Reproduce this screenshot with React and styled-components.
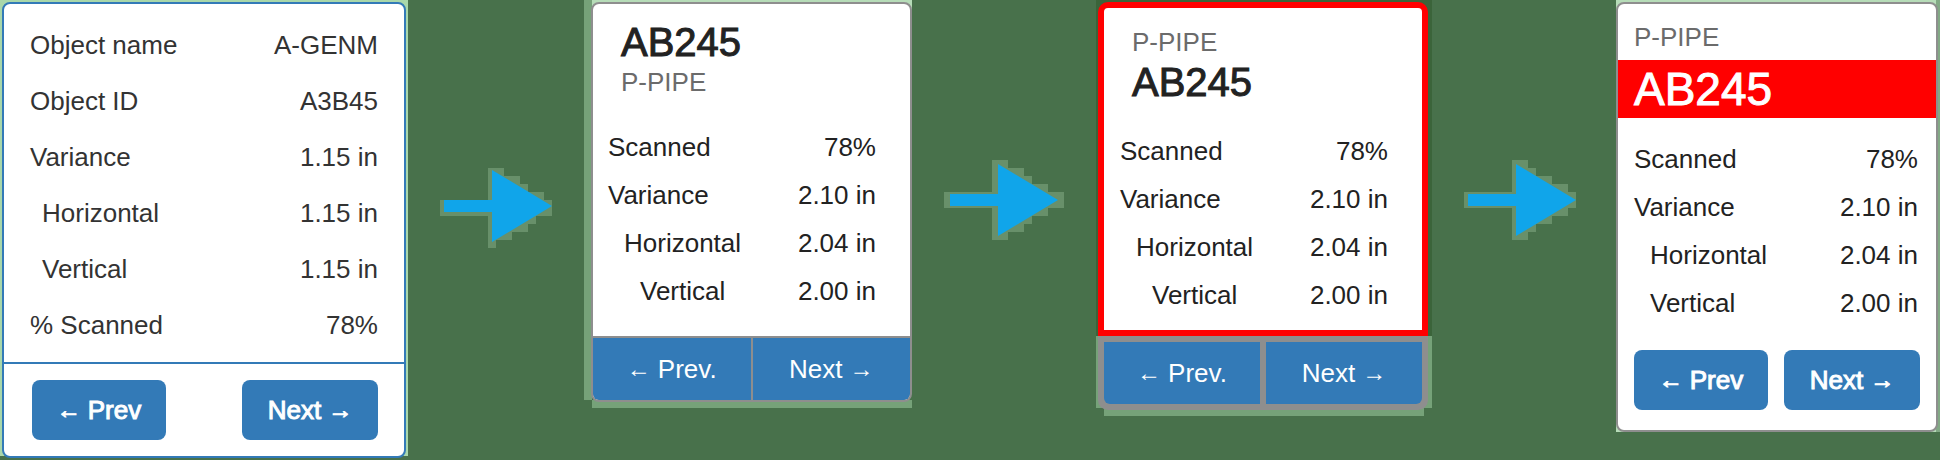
import React from "react";
import styled, { createGlobalStyle, css } from "styled-components";

const color = {
  page: "#48714b",
  blue: "#337ab7",
  red: "#ff0000",
  grey: "#8e8e8e",
  ink: "#222222",
  softInk: "#333333",
  muted: "#6b6b6b",
  mint: "#a9d7aa",
  paleMint: "#b6dcb8",
  sage: "#76a279",
  moss: "#3b643a",
  arrow: "#10a5ea",
  arrowEdge: "#68906a",
};

const GlobalStyle = createGlobalStyle`
  *, *::before, *::after { box-sizing: border-box; }
  html, body { margin: 0; }
  body {
    background: ${color.page};
    color: ${color.ink};
    font: 26px/36px "Liberation Sans", Arial, sans-serif;
    overflow-x: hidden;
  }
`;

const Board = styled.main`
  display: grid;
  grid-template-columns: 408fr 176fr 328fr 184fr 336fr 184fr 324fr;
  align-items: start;
  min-height: 100vh;
`;

const frames = {
  first: css`
    padding: 2px 2px 0;
    background: linear-gradient(${color.mint}, ${color.mint}) 0 0 / 100% calc(100% - 2px) no-repeat;
  `,
  second: css`
    padding: 2px 0 6px 7px;
    background:
      linear-gradient(${color.paleMint}, ${color.paleMint}) right top / calc(100% - 8px) 10px no-repeat,
      linear-gradient(${color.sage}, ${color.sage}) left top / 8px calc(100% - 8px) no-repeat,
      linear-gradient(${color.sage}, ${color.sage}) right bottom / calc(100% - 8px) 8px no-repeat;
  `,
  third: css`
    padding: 2px 4px 6px 2px;
    background:
      linear-gradient(${color.sage}, ${color.sage}) left 0 bottom 8px / 100% 72px no-repeat,
      linear-gradient(${color.sage}, ${color.sage}) center bottom / calc(100% - 16px) 8px no-repeat,
      linear-gradient(${color.moss}, ${color.moss}) 0 0 / 100% 336px no-repeat;
  `,
  fourth: css`
    padding: 2px 2px 0 0;
    background: linear-gradient(${color.paleMint}, ${color.paleMint}) 0 0 / calc(100% - 4px) 100% no-repeat,
      linear-gradient(#82a985, #82a985) right top / 4px 100% no-repeat;
  `,
};

const Frame = styled.div`
  ${({ $kind }) => frames[$kind]}
`;

const Card = styled.section`
  background: #ffffff;
  border: 2px solid ${({ $border }) => $border || color.grey};
  border-radius: 8px;
  color: ${({ $color }) => $color || color.ink};
  overflow: hidden;
`;

const AlertBody = styled.div`
  background: #ffffff;
  border: 6px solid ${color.red};
  border-radius: 10px 10px 0 0;
`;

const Heading = styled.header`
  display: flex;
  flex-direction: column;
  padding: ${({ $pad }) => $pad};
`;

const Code = styled.h2`
  margin: 0;
  font-size: ${({ $large }) => ($large ? 46 : 40)}px;
  line-height: ${({ $large }) => ($large ? 58 : 44)}px;
  font-weight: 400;
  -webkit-text-stroke: 1px currentColor;
  ${({ $large }) =>
    $large &&
    css`
      padding: 0 16px;
      background: ${color.red};
      color: #ffffff;
    `}
`;

const Kind = styled.p`
  margin: 0;
  color: ${color.muted};
  font-kerning: none;
  line-height: 36px;
`;

const Table = styled.table`
  width: 100%;
  border-collapse: collapse;
`;

const TableArea = styled.div`
  padding: ${({ $pad }) => $pad};
`;

const Label = styled.th`
  padding: 0 0 0 ${({ $indent }) => $indent}px;
  font-weight: 400;
  text-align: left;
  line-height: ${({ $height }) => $height}px;
`;

const Value = styled.td`
  padding: 0;
  font-kerning: none;
  text-align: right;
  line-height: ${({ $height }) => $height}px;
`;

const Actions = styled.footer`
  display: flex;
  justify-content: space-between;
  padding: ${({ $pad }) => $pad};
  ${({ $ruled }) => $ruled && css`border-top: 2px solid ${color.blue};`}
`;

const Button = styled.button`
  display: flex;
  align-items: center;
  justify-content: center;
  gap: 7px;
  height: 60px;
  width: ${({ $next }) => ($next ? 136 : 134)}px;
  padding: 0;
  border: 0;
  border-radius: 8px;
  background: ${color.blue};
  color: #ffffff;
  font: inherit;
  -webkit-text-stroke: 1px currentColor;
  cursor: pointer;
`;

const SplitActions = styled.footer`
  display: grid;
  grid-template-columns: 1fr 1fr;
  gap: ${({ $line }) => $line}px;
  background: ${color.grey};
  ${({ $heavy, $line }) =>
    $heavy
      ? css`
          padding: 6px;
          border-radius: 0 0 10px 10px;
        `
      : css`
          padding-top: ${$line}px;
        `}
`;

const SplitButton = styled(Button)`
  width: auto;
  height: 62px;
  border-radius: ${({ $next }) => ($next ? "0 0 6px 0" : "0 0 0 6px")};
  -webkit-text-stroke: 0;
`;

const Glyph = styled.span`
  font-size: 24px;
`;

const ArrowCell = styled.div`
  display: flex;
  justify-content: center;
  padding-top: ${({ $top }) => $top}px;
  svg { display: block; }
`;

const scanRows = (verticalIndent) => [
  ["Scanned", "78%", 0],
  ["Variance", "2.10 in", 0],
  ["Horizontal", "2.04 in", 16],
  ["Vertical", "2.00 in", verticalIndent],
];

const objectRows = [
  ["Object name", "A-GENM", 0],
  ["Object ID", "A3B45", 0],
  ["Variance", "1.15 in", 0],
  ["Horizontal", "1.15 in", 12],
  ["Vertical", "1.15 in", 12],
  ["% Scanned", "78%", 0],
];

function Readings({ rows, height, pad }) {
  return (
    <TableArea $pad={pad}>
      <Table>
        <tbody>
          {rows.map(([label, value, indent]) => (
            <tr key={label}>
              <Label scope="row" $indent={indent} $height={height}>{label}</Label>
              <Value $height={height}>{value}</Value>
            </tr>
          ))}
        </tbody>
      </Table>
    </TableArea>
  );
}

function Pager({ as: Part = Button, prev = "Prev" }) {
  return (
    <>
      <Part type="button"><Glyph>←</Glyph>{prev}</Part>
      <Part type="button" $next>Next<Glyph>→</Glyph></Part>
    </>
  );
}

function Arrow({ top, width, viewBox, edge, fill }) {
  return (
    <ArrowCell $top={top}>
      <svg width={width} height="80" viewBox={viewBox} aria-hidden="true">
        <path d={edge} fill={color.arrowEdge} />
        <path d={fill} fill={color.arrow} />
      </svg>
    </ArrowCell>
  );
}

export default function App() {
  return (
    <>
      <GlobalStyle />
      <Board>
        <Frame $kind="first">
          <Card $border={color.blue} $color={color.softInk}>
            <Readings rows={objectRows} height={56} pad="13px 26px 9px" />
            <Actions $ruled $pad="16px 26px 16px 28px"><Pager /></Actions>
          </Card>
        </Frame>

        <Arrow
          top={168}
          width={112}
          viewBox="10 18 112 80"
          edge="M10 50V66H58V98H66V90H82V82H98V74H106V66H122V50H114V42H98V34H90V26H74V18H58V50Z"
          fill="M14 50H62V20L122 56L62 92V62H14Z"
        />

        <Frame $kind="second">
          <Card>
            <Heading $pad="16px 28px 0">
              <Code>AB245</Code>
              <Kind>P-PIPE</Kind>
            </Heading>
            <Readings rows={scanRows(32)} height={48} pad="23px 34px 21px 15px" />
            <SplitActions $line={2}><Pager as={SplitButton} prev="Prev." /></SplitActions>
          </Card>
        </Frame>

        <Arrow
          top={160}
          width={120}
          viewBox="14 10 120 80"
          edge="M14 42V58H62V90H78V82H94V74H102V66H118V58H134V42H118V34H102V26H94V18H78V10H62V42Z"
          fill="M20 44H68V14L128 50L68 86V56H20Z"
        />

        <Frame $kind="third">
          <AlertBody>
            <Heading $pad="16px 28px 0">
              <Kind>P-PIPE</Kind>
              <Code>AB245</Code>
            </Heading>
            <Readings rows={scanRows(32)} height={48} pad="23px 34px 11px 16px" />
          </AlertBody>
          <SplitActions $line={6} $heavy><Pager as={SplitButton} prev="Prev." /></SplitActions>
        </Frame>

        <Arrow
          top={160}
          width={120}
          viewBox="14 10 120 80"
          edge="M14 42V58H62V90H78V82H86V74H102V66H118V58H126V42H118V34H102V26H86V18H78V10H62V42Z"
          fill="M18 44H66V14L126 50L66 86V56H18Z"
        />

        <Frame $kind="fourth">
          <Card>
            <Heading $pad="15px 16px 5px">
              <Kind>P-PIPE</Kind>
            </Heading>
            <Code $large>AB245</Code>
            <Readings rows={scanRows(16)} height={48} pad="17px 18px 23px 16px" />
            <Actions $pad="0 16px 20px"><Pager /></Actions>
          </Card>
        </Frame>
      </Board>
    </>
  );
}
